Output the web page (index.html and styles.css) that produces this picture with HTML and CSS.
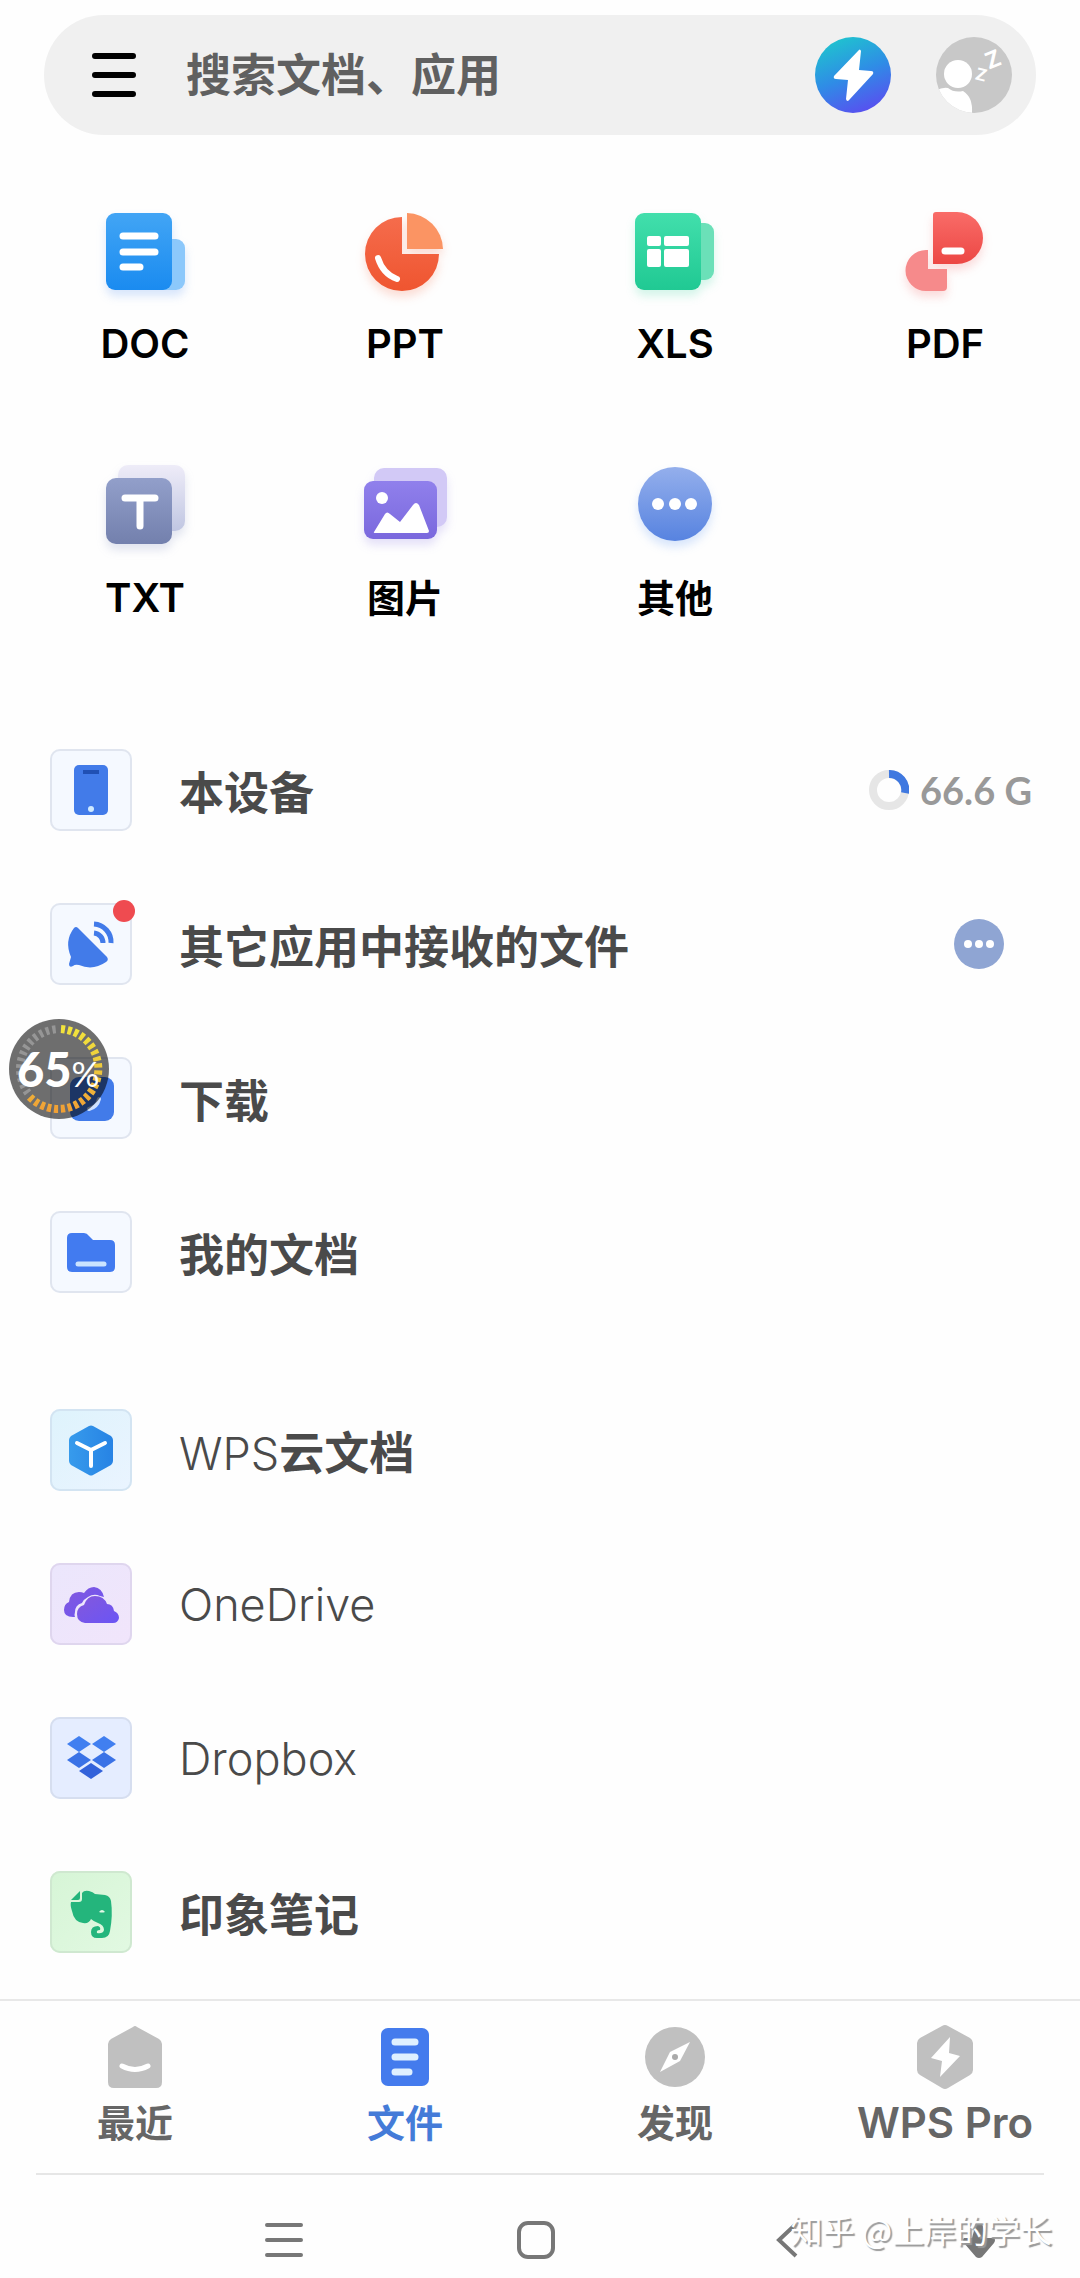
FILE: index.html
```html
<!DOCTYPE html>
<html lang="zh-CN">
   <head>
      <meta charset="UTF-8" />
      <meta name="viewport" content="width=device-width, initial-scale=1.0" />
      <title>文件</title>
      <link rel="stylesheet" href="styles.css">
   </head>
   <body>
      <div class="page">
         <header class="search-bar">
            <button type="button" class="icon-btn" aria-label="菜单">
               <svg class="menu-icon" width="44" height="44" viewBox="0 0 44 44">
                  <path d="M3 3H41M3 22H41M3 41H41" fill="none" stroke="#000" stroke-width="6" stroke-linecap="round" />
               </svg>
            </button>
            <input class="search-input" type="text" placeholder="搜索文档、应用" aria-label="搜索" />
            <button type="button" class="icon-btn" aria-label="会员">
               <svg width="76" height="76" viewBox="0 0 76 76">
                  <defs>
                     <linearGradient id="gBolt" x1="0.3" y1="0" x2="0.7" y2="1">
                        <stop offset="0" stop-color="#1fc3cf" />
                        <stop offset="0.5" stop-color="#2f8ce6" />
                        <stop offset="1" stop-color="#5a4df0" />
                     </linearGradient>
                  </defs>
                  <circle cx="38" cy="38" r="38" fill="url(#gBolt)" />
                  <path d="M43 14L19 39Q18 42 21 42L33 43L31 62Q32 66 35 62L58 37Q59 34 56 34L44 33L46 14Q45 11 43 14Z" fill="#fff" />
               </svg>
            </button>
            <button type="button" class="icon-btn" aria-label="账号">
               <svg width="76" height="76" viewBox="0 0 76 76">
                  <clipPath id="avatarClip"><circle cx="38" cy="38" r="38" /></clipPath>
                  <g clip-path="url(#avatarClip)">
                     <rect width="76" height="76" fill="#c8c8c8" />
                     <circle cx="22" cy="37" r="14" fill="#fff" />
                     <path d="M0 54Q6 50 12 51Q18 56 27 54Q37 60 36 76H0Z" fill="#fff" />
                     <text class="zzz" x="50" y="30" font-size="23" transform="rotate(-22 58 22)">Z</text>
                     <text class="zzz" x="40" y="44" font-size="17" transform="rotate(14 46 38)">Z</text>
                  </g>
               </svg>
            </button>
         </header>

         <nav class="types">
            <a class="type" href="#">
               <svg class="type-icon shadow-blue" viewBox="0 0 96 96">
                  <defs>
                     <linearGradient id="gDoc" x1="0" y1="0" x2="0" y2="1">
                        <stop offset="0" stop-color="#42a5f5" />
                        <stop offset="1" stop-color="#1a8bf0" />
                     </linearGradient>
                  </defs>
                  <rect x="50" y="35" width="38" height="51" rx="9" fill="#8cc8fb" />
                  <rect x="9" y="9" width="66" height="77" rx="9" fill="url(#gDoc)" />
                  <path d="M26 32H58M26 48H58M26 63H43" stroke="#fff" stroke-width="7" stroke-linecap="round" />
               </svg>
               <span class="label">DOC</span>
            </a>
            <a class="type" href="#">
               <svg class="type-icon shadow-orange" viewBox="0 0 96 96">
                  <defs>
                     <linearGradient id="gPpt" x1="0" y1="0" x2="0" y2="1">
                        <stop offset="0" stop-color="#f56c4c" />
                        <stop offset="1" stop-color="#ef5530" />
                     </linearGradient>
                  </defs>
                  <path d="M45 13A37 37 0 1 0 82 50H45Z" fill="url(#gPpt)" />
                  <path d="M50 9A37 37 0 0 1 86 45H50Z" fill="#fb9463" />
                  <path d="M21 54Q26 70 40 75" fill="none" stroke="#fff" stroke-width="6" stroke-linecap="round" />
               </svg>
               <span class="label">PPT</span>
            </a>
            <a class="type" href="#">
               <svg class="type-icon shadow-green" viewBox="0 0 96 96">
                  <defs>
                     <linearGradient id="gXls" x1="0" y1="0" x2="0" y2="1">
                        <stop offset="0" stop-color="#42dfac" />
                        <stop offset="1" stop-color="#20c993" />
                     </linearGradient>
                  </defs>
                  <rect x="50" y="19" width="37" height="57" rx="9" fill="#6be0b8" />
                  <rect x="8" y="9" width="66" height="77" rx="9" fill="url(#gXls)" />
                  <g fill="#fff">
                     <rect x="20" y="32" width="14" height="10" rx="2" />
                     <rect x="37" y="32" width="25" height="10" rx="2" />
                     <rect x="20" y="45" width="14" height="18" rx="2" />
                     <rect x="37" y="45" width="25" height="18" rx="2" />
                  </g>
               </svg>
               <span class="label">XLS</span>
            </a>
            <a class="type" href="#">
               <svg class="type-icon shadow-red" viewBox="0 0 96 96">
                  <defs>
                     <linearGradient id="gPdf" x1="0" y1="0" x2="0" y2="1">
                        <stop offset="0" stop-color="#f96c68" />
                        <stop offset="1" stop-color="#ec4744" />
                     </linearGradient>
                  </defs>
                  <path d="M31 46V65H50V83Q50 87 46 87H29A20 20 0 0 1 29 46Z" fill="#f68a8b" />
                  <path d="M36 11Q36 8 39 8H60A26 26 0 0 1 60 60H36Z" fill="url(#gPdf)" />
                  <path d="M48 47H64" stroke="#fff" stroke-width="7" stroke-linecap="round" />
               </svg>
               <span class="label">PDF</span>
            </a>
            <a class="type" href="#">
               <svg class="type-icon shadow-slate" viewBox="0 0 96 96">
                  <defs>
                     <linearGradient id="gTxtBack" x1="0" y1="0" x2="0" y2="1">
                        <stop offset="0" stop-color="#eeecf8" />
                        <stop offset="1" stop-color="#c0c6e2" />
                     </linearGradient>
                     <linearGradient id="gTxt" x1="0" y1="0" x2="0" y2="1">
                        <stop offset="0" stop-color="#929fca" />
                        <stop offset="1" stop-color="#7380ad" />
                     </linearGradient>
                  </defs>
                  <rect x="21" y="7" width="67" height="66" rx="10" fill="url(#gTxtBack)" />
                  <rect x="9" y="20" width="66" height="66" rx="10" fill="url(#gTxt)" />
                  <path d="M28 40H58M43 40V68" stroke="#fff" stroke-width="7" stroke-linecap="round" />
               </svg>
               <span class="label">TXT</span>
            </a>
            <a class="type" href="#">
               <svg class="type-icon shadow-purple" viewBox="0 0 96 96">
                  <defs>
                     <linearGradient id="gImg" x1="0" y1="0" x2="0" y2="1">
                        <stop offset="0" stop-color="#9080ec" />
                        <stop offset="1" stop-color="#7a68dd" />
                     </linearGradient>
                  </defs>
                  <rect x="17" y="10" width="73" height="59" rx="10" fill="#d2c9f6" />
                  <rect x="7" y="23" width="73" height="58" rx="9" fill="url(#gImg)" />
                  <circle cx="25" cy="40" r="6" fill="#fff" />
                  <path d="M17 74L28 56Q30 53 33 56L43 64L56 47Q59 43 62 47L72 73Q72 75 70 75H18Q16 75 17 74Z" fill="#fff" />
               </svg>
               <span class="label label-cn">图片</span>
            </a>
            <a class="type" href="#">
               <svg class="type-icon shadow-blue" viewBox="0 0 96 96">
                  <defs>
                     <linearGradient id="gMore" x1="0" y1="0" x2="0" y2="1">
                        <stop offset="0" stop-color="#94afec" />
                        <stop offset="1" stop-color="#5783e0" />
                     </linearGradient>
                  </defs>
                  <circle cx="48" cy="46" r="37" fill="url(#gMore)" />
                  <g fill="#fff">
                     <circle cx="31" cy="46" r="6" />
                     <circle cx="48" cy="46" r="6" />
                     <circle cx="64" cy="46" r="6" />
                  </g>
               </svg>
               <span class="label label-cn">其他</span>
            </a>
         </nav>

         <main class="places">
            <ul class="list">
               <li>
                  <a class="row" href="#">
                     <span class="tile">
                        <svg viewBox="0 0 82 82">
                           <rect x="24" y="16" width="34" height="50" rx="5" fill="#427be9" />
                           <rect x="33" y="21" width="16" height="4" fill="#2050b4" />
                           <circle cx="41" cy="60" r="3" fill="#cfeaff" />
                        </svg>
                     </span>
                     <span class="name">本设备</span>
                     <svg width="40" height="40" viewBox="0 0 40 40">
                        <circle cx="20" cy="20" r="16" fill="none" stroke="#e6e6e6" stroke-width="8" />
                        <path d="M20 4A16 16 0 0 1 36 23" fill="none" stroke="#3f78e0" stroke-width="8" />
                     </svg>
                     <span class="size">66.6 G</span>
                  </a>
               </li>
               <li>
                  <a class="row" href="#">
                     <span class="tile">
                        <svg viewBox="0 0 82 82">
                           <path d="M24 25Q26 23 28 25L57 54Q59 57 56 59Q43 68 29 62Q25 61 23 63Q19 65 19 61L21 54Q14 38 24 25Z" fill="#427be9" />
                           <path d="M44 21A18 18 0 0 1 61 40M44 30A10 10 0 0 1 53 40" fill="none" stroke="#427be9" stroke-width="5" />
                        </svg>
                        <span class="dot"></span>
                     </span>
                     <span class="name">其它应用中接收的文件</span>
                     <svg class="more" width="50" height="50" viewBox="0 0 50 50">
                        <circle cx="25" cy="25" r="25" fill="#8fa5d3" />
                        <g fill="#fff">
                           <circle cx="14" cy="25" r="4" />
                           <circle cx="25" cy="25" r="4" />
                           <circle cx="36" cy="25" r="4" />
                        </g>
                     </svg>
                  </a>
               </li>
               <li>
                  <a class="row" href="#">
                     <span class="tile">
                        <svg viewBox="0 0 82 82">
                           <rect x="20" y="20" width="44" height="44" rx="9" fill="#427be9" />
                           <path d="M39 52Q47 50 49 42" fill="none" stroke="#cfe2ff" stroke-width="4" stroke-linecap="round" />
                        </svg>
                     </span>
                     <span class="name">下载</span>
                  </a>
               </li>
               <li>
                  <a class="row" href="#">
                     <span class="tile">
                        <svg viewBox="0 0 82 82">
                           <path d="M17 27Q17 22 22 22H34Q37 22 39 25L43 29H60Q65 29 65 34V56Q65 61 60 61H22Q17 61 17 56Z" fill="#427bf0" />
                           <path d="M28 53H54" stroke="#cbe4ff" stroke-width="5" stroke-linecap="round" />
                        </svg>
                     </span>
                     <span class="name">我的文档</span>
                  </a>
               </li>
            </ul>

            <ul class="list">
               <li>
                  <a class="row" href="#">
                     <span class="tile tile-wps">
                        <svg viewBox="0 0 82 82">
                           <defs>
                              <linearGradient id="gCube" x1="0" y1="0" x2="1" y2="0">
                                 <stop offset="0" stop-color="#379bec" />
                                 <stop offset="1" stop-color="#2783e4" />
                              </linearGradient>
                           </defs>
                           <path d="M39 17Q41 16 43 17L61 27Q63 29 63 31V52Q63 54 61 56L43 66Q41 67 39 66L21 56Q19 54 19 52V31Q19 29 21 27Z" fill="url(#gCube)" />
                           <path d="M27 34L41 41L55 34M41 41V57" fill="none" stroke="#fff" stroke-width="4" stroke-linecap="round" />
                        </svg>
                     </span>
                     <span class="name"><span class="latin">WPS</span>云文档</span>
                  </a>
               </li>
               <li>
                  <a class="row" href="#">
                     <span class="tile tile-onedrive">
                        <svg viewBox="0 0 82 82">
                           <defs>
                              <linearGradient id="gCloud" x1="0" y1="0" x2="1" y2="1">
                                 <stop offset="0" stop-color="#8458dc" />
                                 <stop offset="1" stop-color="#6a55f5" />
                              </linearGradient>
                           </defs>
                           <path d="M23 54Q14 54 14 47Q14 41 19 39Q20 29 29 29Q32 29 34 30Q38 24 44 24Q52 25 54 34L50 33Q44 30 38 34Q34 36 32 40Q25 42 25 49Q24 52 25 54Z" fill="url(#gCloud)" />
                           <path d="M35 60Q27 59 27 51Q27 44 34 42Q37 33 45 33Q54 33 57 41Q63 41 64 48Q69 50 69 55Q68 60 63 60Z" fill="url(#gCloud)" />
                        </svg>
                     </span>
                     <span class="name latin">OneDrive</span>
                  </a>
               </li>
               <li>
                  <a class="row" href="#">
                     <span class="tile tile-dropbox">
                        <svg viewBox="0 0 82 82">
                           <path d="M29 19L41 27L29 35L17 27ZM54 19L66 27L54 35L42 27Z" fill="#417ff0" />
                           <path d="M29 35L41 43L29 51L17 43ZM54 35L66 43L54 51L42 43Z" fill="#3a72e6" />
                           <path d="M41 46L53 54L41 62L29 54Z" fill="#3362da" />
                        </svg>
                     </span>
                     <span class="name latin">Dropbox</span>
                  </a>
               </li>
               <li>
                  <a class="row" href="#">
                     <span class="tile tile-note">
                        <svg viewBox="0 0 82 82">
                           <path d="M21 29L30 20V27Q30 29 28 29Z" fill="#24b57c" />
                           <path d="M32 22Q34 19 39 20Q43 21 45 23L55 24Q60 25 61 30Q63 44 60 60Q59 67 52 67H47Q41 67 41 61Q41 55 48 55Q51 56 50 59Q46 59 47 62Q53 63 54 59Q54 54 48 52Q43 50 41 48Q39 53 33 52Q24 51 22 40Q20 34 21 31H29Q32 31 32 28Z" fill="#24b57c" />
                           <path d="M49 41Q52 37 55 41Q52 42 49 41Z" fill="#e2f8e6" />
                        </svg>
                     </span>
                     <span class="name">印象笔记</span>
                  </a>
               </li>
            </ul>
         </main>

         <nav class="tabs">
            <a class="tab" href="#">
               <svg class="tab-icon" viewBox="0 0 68 68">
                  <path d="M32 4Q34 2 36 4L58 16Q61 18 61 21V59Q61 65 55 65H13Q7 65 7 59V21Q7 18 10 16Z" fill="#c0c0c0" />
                  <path d="M21 43Q34 50 47 43" fill="none" stroke="#fff" stroke-width="5" stroke-linecap="round" />
               </svg>
               <span class="label label-cn">最近</span>
            </a>
            <a class="tab active" href="#">
               <svg class="tab-icon" viewBox="0 0 68 68">
                  <rect x="10" y="5" width="48" height="58" rx="7" fill="#447bed" />
                  <path d="M24 19H44M24 34H44M24 49H38" stroke="#dff0ff" stroke-width="7" stroke-linecap="round" />
               </svg>
               <span class="label label-cn">文件</span>
            </a>
            <a class="tab" href="#">
               <svg class="tab-icon" viewBox="0 0 68 68">
                  <circle cx="34" cy="34" r="30" fill="#c0c0c0" />
                  <path d="M49 19L39 38L19 49L29 29Z" fill="#fff" />
                  <circle cx="34" cy="34" r="3" fill="#aaa" />
               </svg>
               <span class="label label-cn">发现</span>
            </a>
            <a class="tab" href="#">
               <svg class="tab-icon" viewBox="0 0 68 68">
                  <path d="M31 3Q34 1 37 3L59 15Q62 17 62 20V47Q62 50 59 52L37 65Q34 67 31 65L9 52Q6 50 6 47V20Q6 17 9 15Z" fill="#c0c0c0" />
                  <path d="M39 14L20 35L31 38L29 54L49 33L38 30Z" fill="#fff" />
               </svg>
               <span class="label label-pro">WPS Pro</span>
            </a>
         </nav>
         <hr class="divider" />

         <footer class="sys-nav">
            <button type="button" class="icon-btn sys-menu" aria-label="最近任务">
               <svg width="38" height="38" viewBox="0 0 38 38">
                  <path d="M2 4H36M2 19H36M2 34H36" stroke="#777" stroke-width="4" stroke-linecap="round" />
               </svg>
            </button>
            <button type="button" class="icon-btn" aria-label="主页">
               <svg width="38" height="38" viewBox="0 0 38 38">
                  <rect x="2" y="2" width="34" height="34" rx="9" fill="none" stroke="#777" stroke-width="4" />
               </svg>
            </button>
            <button type="button" class="icon-btn" aria-label="返回">
               <svg width="38" height="38" viewBox="0 0 38 38">
                  <path d="M27 3L10 19L27 35" fill="none" stroke="#777" stroke-width="4" />
               </svg>
            </button>
            <button type="button" class="icon-btn" aria-label="收起">
               <svg width="38" height="38" viewBox="0 0 38 38">
                  <path d="M16 2Q19 0 22 2L26 17H34Q36 19 34 22L22 36Q19 38 16 36L4 22Q2 19 4 17H12Z" fill="#777" />
               </svg>
            </button>
            <span class="watermark">知乎 @上岸的学长</span>
         </footer>

         <div class="battery">
            <svg viewBox="0 0 100 100">
               <defs>
                  <linearGradient id="gTicks" x1="0" y1="0" x2="0" y2="1">
                     <stop offset="0" stop-color="#f2e43c" />
                     <stop offset="0.6" stop-color="#edc23c" />
                     <stop offset="1" stop-color="#f0a035" />
                  </linearGradient>
               </defs>
               <path d="M52 10A40 40 0 1 1 19 76" pathLength="23" fill="none" stroke="url(#gTicks)" stroke-width="8" stroke-dasharray="0.6 0.4" />
               <path d="M19 74A40 40 0 0 1 50 10" pathLength="13" fill="none" stroke="#969696" stroke-width="8" stroke-dasharray="0.5 0.5" />
            </svg>
            <span class="battery-text">65<small>%</small></span>
         </div>
      </div>
   </body>
</html>
```

FILE: styles.css
```css
* {
    box-sizing: border-box;
}

body {
    margin: 0;
    background-color: #fefefe;
    font-family: Inter, "Noto Sans CJK SC", sans-serif;
    color: #4a4a4a;
}

a {
    text-decoration: none;
    color: inherit;
}

svg {
    display: block;
    flex-shrink: 0;
}

.page {
    position: relative;
    padding-top: 15px;
}

.icon-btn {
    display: flex;
    flex-shrink: 0;
    padding: 0;
    border: none;
    background: none;
}

/* search */
.search-bar {
    display: flex;
    align-items: center;
    height: 120px;
    margin: 0 44px;
    padding: 0 24px 0 48px;
    background-color: #f0f0f0;
    border-radius: 60px;
}

.search-bar .icon-btn + .icon-btn {
    margin-left: 45px;
}

.search-input {
    flex: 1;
    min-width: 0;
    margin-left: 50px;
    padding: 0;
    border: none;
    outline: none;
    background: none;
    font-family: inherit;
    font-size: 45px;
    font-weight: 700;
}

.search-input::placeholder {
    color: #606060;
    opacity: 1;
}

.zzz {
    font-family: Lato, sans-serif;
    font-weight: 900;
    fill: #fff;
}

/* file types */
.types {
    display: grid;
    grid-template-columns: repeat(4, 1fr);
    row-gap: 86px;
    padding-top: 69px;
}

.type, .tab {
    display: flex;
    flex-direction: column;
    align-items: center;
}

.type {
    gap: 16px;
    color: #000;
}

.type:nth-child(4n + 1) {
    padding-left: 20px;
}

.type-icon {
    width: 96px;
    height: 96px;
    overflow: visible;
}

.shadow-blue { filter: drop-shadow(0 6px 5px rgba(60, 130, 240, 0.2)); }
.shadow-orange { filter: drop-shadow(0 6px 5px rgba(240, 90, 50, 0.2)); }
.shadow-green { filter: drop-shadow(0 6px 5px rgba(40, 210, 150, 0.2)); }
.shadow-red { filter: drop-shadow(0 6px 5px rgba(240, 80, 80, 0.2)); }
.shadow-slate { filter: drop-shadow(0 6px 5px rgba(110, 125, 180, 0.2)); }
.shadow-purple { filter: drop-shadow(0 6px 5px rgba(125, 105, 225, 0.2)); }

.label {
    font-size: 40px;
    font-weight: 600;
    line-height: 56px;
}

.label-cn {
    font-size: 38px;
    font-weight: 700;
}

.label-pro {
    font-size: 42px;
}

/* places */
.places {
    display: flex;
    flex-direction: column;
    gap: 116px;
    padding: 123px 48px 46px 50px;
}

.list {
    display: flex;
    flex-direction: column;
    gap: 72px;
    margin: 0;
    padding: 0;
    list-style: none;
}

.row {
    display: flex;
    align-items: center;
    height: 82px;
}

.tile {
    position: relative;
    flex-shrink: 0;
    width: 82px;
    height: 82px;
    background-color: #f5f9ff;
    border-radius: 10px;
    box-shadow: inset 0 0 0 2px #e0e5ef;
}

.tile-wps {
    background: linear-gradient(135deg, #def3fc, #eaf4ff);
    box-shadow: inset 0 0 0 2px #d3e4f2;
}

.tile-onedrive {
    background: linear-gradient(135deg, #ebe6fc, #f1e5fb);
    box-shadow: inset 0 0 0 2px #dfd6ee;
}

.tile-dropbox {
    background-color: #e5edff;
    box-shadow: inset 0 0 0 2px #d6deef;
}

.tile-note {
    background: linear-gradient(135deg, #d6f5d6, #e2f9e2);
    box-shadow: inset 0 0 0 2px #cfe8d0;
}

.dot {
    position: absolute;
    top: -3px;
    right: -3px;
    width: 22px;
    height: 22px;
    border-radius: 50%;
    background-color: #ef4b50;
}

.name {
    flex: 1;
    margin-left: 47px;
    font-size: 45px;
    font-weight: 700;
    white-space: nowrap;
}

.latin {
    font-weight: 300;
}

.size {
    margin-left: 11px;
    font-family: Lato, sans-serif;
    font-size: 38px;
    font-weight: 700;
    color: #999;
}

.more {
    margin-right: 28px;
}

/* bottom tabs */
.tabs {
    display: grid;
    grid-template-columns: repeat(4, 1fr);
    padding: 22px 0;
    border-top: 2px solid #e8e8e8;
}

.tab {
    gap: 4px;
    color: #666;
}

.tab.active {
    color: #447bd8;
}

.tab-icon {
    width: 68px;
    height: 68px;
}

.divider {
    height: 2px;
    margin: 0 36px;
    border: none;
    background-color: #e6e6e6;
}

.sys-nav {
    position: relative;
    display: grid;
    grid-template-columns: 158fr 252fr 252fr 252fr 130fr 36fr;
    justify-items: center;
    padding: 46px 0 18px;
}

.sys-menu {
    grid-column: 2;
}

.watermark {
    position: absolute;
    right: 28px;
    top: 30px;
    font-family: "Noto Sans CJK SC", sans-serif;
    font-size: 32px;
    line-height: 48px;
    color: #fff;
    text-shadow: 2px 2px 1px #999;
    white-space: nowrap;
}

/* floating battery bubble */
.battery {
    position: absolute;
    left: 9px;
    top: 1019px;
    width: 100px;
    height: 100px;
    border-radius: 50%;
    background-color: rgba(0, 0, 0, 0.57);
}

.battery-text {
    position: absolute;
    left: 8px;
    top: 20px;
    font-family: Lato, sans-serif;
    font-size: 47px;
    font-weight: 900;
    line-height: 60px;
    color: #fff;
    white-space: nowrap;
}

.battery-text small {
    font-size: 35px;
    font-weight: 400;
}
```
